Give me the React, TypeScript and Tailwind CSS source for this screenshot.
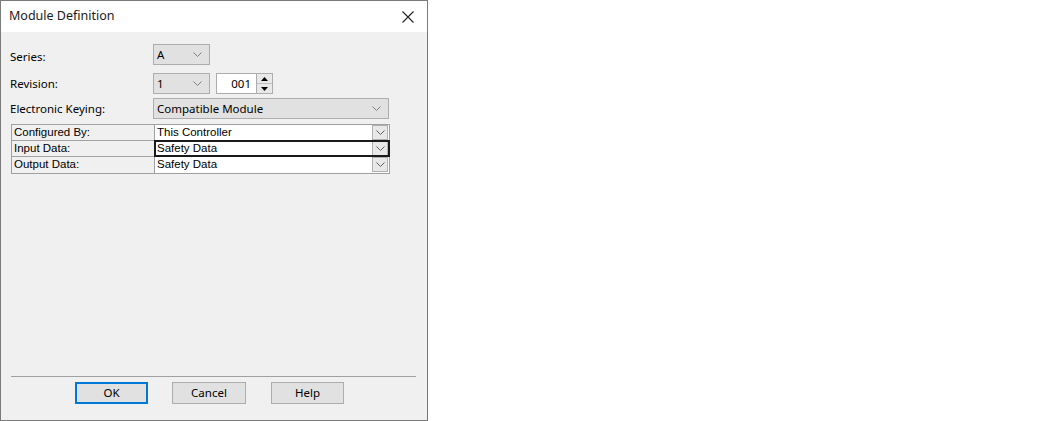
import React from 'react';

const Chevron: React.FC<{ className?: string }> = ({ className }) => (
  <svg width="9" height="5" viewBox="0 0 9 5" className={className}>
    <path d="M0.5 0.5 L4.5 4.5 L8.5 0.5" fill="none" stroke="currentColor" strokeWidth="1" />
  </svg>
);

const Combo: React.FC<{ value: string; width: string }> = ({ value, width }) => (
  <div className={`${width} h-[21px] flex items-center justify-between bg-[#e1e1e1] border border-[#adadad] pl-[3px] pr-[7px]`}>
    <span>{value}</span>
    <Chevron className="text-[#808080]" />
  </div>
);

const GridRow: React.FC<{ label: string; value: string; focused?: boolean; last?: boolean }> = ({ label, value, focused, last }) => (
  <div className={`flex h-[16px] ${last ? '' : 'border-b border-[#a0a0a0]'}`}>
    <div className="w-[143px] shrink-0 border-r border-[#a0a0a0] pl-[2px] leading-[15px]">{label}</div>
    <div className={`flex-1 flex bg-white ${focused ? 'outline outline-2 -outline-offset-1 outline-[#1a1a1a]' : ''}`}>
      <div className="flex-1 pl-[2px] leading-[15px]">{value}</div>
      <div className="w-[16px] h-[15px] mr-[1px] bg-[#e8e8e8] border border-[#b0b0b0] flex items-center justify-center">
        <Chevron className="text-[#606060]" />
      </div>
    </div>
  </div>
);

const App: React.FC = () => {
  return (
    <div className="w-[1050px] h-[421px] bg-white">
      <div className="w-[428px] h-[421px] border border-[#7a7a7a] flex flex-col bg-[#f0f0f0] font-['Noto_Sans',sans-serif] text-[11.5px] text-black">
        <div className="h-[31px] bg-white flex items-center justify-between pl-[8px] pr-[13px] shrink-0">
          <span className="text-[12.5px] text-[#1a1a1a]">Module Definition</span>
          <svg width="12" height="12" viewBox="0 0 12 12">
            <path d="M0.5 0.5 L11.5 11.5 M11.5 0.5 L0.5 11.5" stroke="#222" strokeWidth="1.1" />
          </svg>
        </div>

        <div className="flex flex-col pl-[9px] pr-[11px] pt-[12px] flex-1">
          <div className="flex items-center h-[21px]">
            <div className="w-[143px] pt-[5px]">Series:</div>
            <Combo value="A" width="w-[57px]" />
          </div>
          <div className="flex items-center h-[21px] mt-[8px]">
            <div className="w-[143px]">Revision:</div>
            <Combo value="1" width="w-[57px]" />
            <div className="ml-[6px] flex h-[21px]">
              <div className="w-[41px] bg-white border border-[#adadad] flex items-center justify-end pr-[5px]">001</div>
              <div className="w-[16px] flex flex-col border border-l-0 border-[#adadad] bg-[#e8e8e8]">
                <div className="flex-1 flex items-center justify-center border-b border-[#c0c0c0]">
                  <svg width="7" height="4" viewBox="0 0 7 4"><path d="M0 4 L3.5 0 L7 4 Z" fill="#000" /></svg>
                </div>
                <div className="flex-1 flex items-center justify-center">
                  <svg width="7" height="4" viewBox="0 0 7 4"><path d="M0 0 L3.5 4 L7 0 Z" fill="#000" /></svg>
                </div>
              </div>
            </div>
          </div>
          <div className="flex items-center h-[21px] mt-[4px]">
            <div className="w-[143px]">Electronic Keying:</div>
            <Combo value="Compatible Module" width="w-[236px]" />
          </div>

          <div className="mt-[5px] ml-[1px] w-[379px] border border-[#a0a0a0] font-['Liberation_Sans',sans-serif] text-[11.5px]">
            <GridRow label="Configured By:" value="This Controller" />
            <GridRow label="Input Data:" value="Safety Data" focused />
            <GridRow label="Output Data:" value="Safety Data" last />
          </div>

          <div className="flex-1" />
          <div className="h-px bg-[#a0a0a0] ml-[1px]" />
          <div className="flex pt-[5px] pb-[16px] pl-[65px] gap-[24px]">
            <button className="w-[73px] h-[22px] bg-[#e1e1e1] border-2 border-[#0078d7] text-[11.5px]">OK</button>
            <button className="w-[74px] h-[22px] bg-[#e1e1e1] border border-[#adadad] text-[11.5px]">Cancel</button>
            <button className="w-[73px] h-[22px] bg-[#e1e1e1] border border-[#adadad] text-[11.5px] ml-[1px]">Help</button>
          </div>
        </div>
      </div>
    </div>
  );
};

export default App;
